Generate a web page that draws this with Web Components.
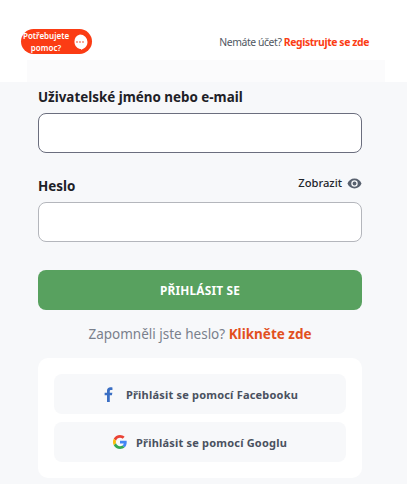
<!DOCTYPE html>
<html lang="cs">
<head>
<meta charset="utf-8">
<title>Přihlášení</title>
<style>
    html, body { margin: 0; padding: 0; background: #fff; }
    body { font-family: "Noto Sans", "Open Sans", sans-serif; width: 407px; height: 484px; overflow: hidden; }
</style>
</head>
<body>
<top-bar></top-bar>
<login-page></login-page>

<script>
class HelpPill extends HTMLElement {
    constructor() {
        super();
        this.attachShadow({mode: 'open'});
        this.shadowRoot.innerHTML = `
            <style>
                :host { display: flex; align-items: center; width: 71px; height: 25px; box-sizing: border-box; background: #fb3c14; border-radius: 13px; color: #fff; }
                .text { width: 46px; margin-left: 2px; text-align: center; font-size: 8px; font-weight: 600; line-height: 12px; white-space: nowrap; }
                svg { margin-left: 3px; display: block; }
            </style>
            <div class="text">Potřebujete<br>pomoc?</div>
            <svg width="16" height="16" viewBox="0 0 16 16">
                <path d="M8 .5a7.500 7.500 0 0 1 7.500 7.500c0 3-1.600 5.400-3.800 6.500-1 .5-1.900 1-2.600 1.500v-1H8A7.500 7.500 0 0 1 8 .5z" fill="#fff"/>
                <circle cx="5" cy="8" r=".9" fill="#f4826a"/><circle cx="8" cy="8" r=".9" fill="#f4826a"/><circle cx="11" cy="8" r=".9" fill="#f4826a"/>
            </svg>
        `;
    }
}

class TopBar extends HTMLElement {
    constructor() {
        super();
        this.attachShadow({mode: 'open'});
        this.shadowRoot.innerHTML = `
            <style>
                :host { display: flex; justify-content: space-between; align-items: flex-start; height: 60px; box-sizing: border-box; padding: 29px 38px 0 21px; background: #fff; }
                .signup { font-size: 10.400px; letter-spacing: -.4px; line-height: 14px; margin-top: 6px; color: #4f5762; white-space: nowrap; }
                b { color: #fb3c14; font-weight: 700; }
            </style>
            <help-pill></help-pill>
            <div class="signup">Nemáte účet? <b>Registrujte se zde</b></div>
        `;
    }
}

class FieldBox extends HTMLElement {
    constructor() {
        super();
        this.attachShadow({mode: 'open'});
        this.shadowRoot.innerHTML = `
            <style>
                :host { display: block; height: 40px; box-sizing: border-box; background: #fff; border: 1px solid #b4b6bc; border-radius: 8px; }
                :host([focused]) { border-color: #6b6e7e; }
            </style>
        `;
    }
}

class SocialButton extends HTMLElement {
    constructor() {
        super();
        this.attachShadow({mode: 'open'});
        this.shadowRoot.innerHTML = `
            <style>
                :host { display: flex; align-items: center; justify-content: center; height: 40px; background: #f7f8fa; border-radius: 8px; color: #4a5160; font-size: 11px; font-weight: 700; letter-spacing: .2px; white-space: nowrap; }
                ::slotted(svg) { display: block; }
            </style>
            <slot name="icon"></slot>
            <slot></slot>
        `;
    }
}

class LoginPage extends HTMLElement {
    constructor() {
        super();
        this.attachShadow({mode: 'open'});
        this.shadowRoot.innerHTML = `
            <style>
                :host { display: block; }
                .strip { height: 22px; margin: 0 22px 0 27px; background: #fbfbfc; }
                .main { background: #f7f8fa; padding: 0 45px 6px 38px; height: 402px; box-sizing: border-box; }
                .label { font-size: 13.400px; font-weight: 700; color: #1e2127; line-height: 18px; }
                .user-label { padding-top: 6px; height: 31px; box-sizing: border-box; }
                .pass-row { display: flex; justify-content: space-between; align-items: flex-start; margin-top: 21px; height: 28px; }
                .pass-row .label { margin-top: 3px; }
                .show { display: flex; align-items: center; gap: 5px; font-size: 11.200px; font-weight: 500; color: #22252b; line-height: 14px; margin-top: 2px; }
                .submit { display: flex; align-items: center; justify-content: center; height: 40px; margin-top: 28px; background: #58a15f; border-radius: 8px; color: #fff; font-size: 11.800px; font-weight: 700; letter-spacing: .2px; }
                .forgot { text-align: center; margin-top: 15px; font-size: 13.500px; line-height: 18px; color: #7a808c; }
                .forgot b { color: #e2501f; font-weight: 700; }
                .card { display: flex; flex-direction: column; gap: 8px; margin-top: 15px; padding: 16px; background: #fff; border-radius: 10px; }
                .fb { margin-left: 2px; margin-right: 13px; }
                .gg { margin-right: 9px; }
            </style>
            <div class="strip"></div>
            <div class="main">
                <div class="label user-label">Uživatelské jméno nebo e-mail</div>
                <field-box focused></field-box>
                <div class="pass-row">
                    <div class="label">Heslo</div>
                    <div class="show">Zobrazit
                        <svg width="15" height="11" viewBox="0 0 24 18"><path fill="#58606e" d="M12 1C6.500 1 2.200 4.400.5 9c1.700 4.600 6 8 11.500 8s9.800-3.400 11.500-8C21.800 4.400 17.500 1 12 1zm0 13.300A5.300 5.300 0 1 1 12 3.700a5.300 5.300 0 0 1 0 10.600zM12 5.800a3.200 3.200 0 1 0 0 6.400 3.200 3.200 0 0 0 0-6.400z"/></svg>
                    </div>
                </div>
                <field-box></field-box>
                <div class="submit">PŘIHLÁSIT SE</div>
                <div class="forgot">Zapomněli jste heslo? <b>Klikněte zde</b></div>
                <div class="card">
                    <social-button>
                        <svg slot="icon" class="fb" width="9" height="15" viewBox="0 0 8 14"><path fill="#3b6fc4" d="M5.200 14V7.800h2l.4-2.500H5.200V3.900c0-.8.300-1.200 1.200-1.200H7.700V.4C7.300.3 6.600.2 5.800.2 3.900.2 2.600 1.400 2.600 3.500v1.800H.4v2.500h2.200V14z"/></svg>
                        Přihlásit se pomocí Facebooku
                    </social-button>
                    <social-button>
                        <svg slot="icon" class="gg" width="14" height="14" viewBox="0 0 48 48">
                            <path fill="#ea4335" d="M24 9.500c3.500 0 6.700 1.300 9.100 3.500l6.800-6.800C35.800 2.400 30.200 0 24 0 14.600 0 6.500 5.400 2.600 13.200l7.900 6.200C12.400 13.700 17.700 9.500 24 9.500z"/>
                            <path fill="#4285f4" d="M47 24.500c0-1.600-.2-3.100-.4-4.500H24v9h12.900c-.6 3-2.200 5.500-4.800 7.200l7.700 6C44.300 38 47 31.800 47 24.500z"/>
                            <path fill="#fbbc05" d="M10.500 28.600c-.5-1.400-.8-3-.8-4.600s.3-3.200.8-4.600l-7.900-6.200C.9 16.500 0 20.100 0 24s.9 7.500 2.600 10.800z"/>
                            <path fill="#34a853" d="M24 48c6.500 0 11.900-2.100 15.800-5.800l-7.700-6c-2.100 1.400-4.900 2.300-8.100 2.300-6.300 0-11.600-4.200-13.500-9.900l-7.900 6.200C6.500 42.600 14.600 48 24 48z"/>
                        </svg>
                        Přihlásit se pomocí Googlu
                    </social-button>
                </div>
            </div>
        `;
    }
}

customElements.define('help-pill', HelpPill);
customElements.define('top-bar', TopBar);
customElements.define('field-box', FieldBox);
customElements.define('social-button', SocialButton);
customElements.define('login-page', LoginPage);
</script>
</body>
</html>
